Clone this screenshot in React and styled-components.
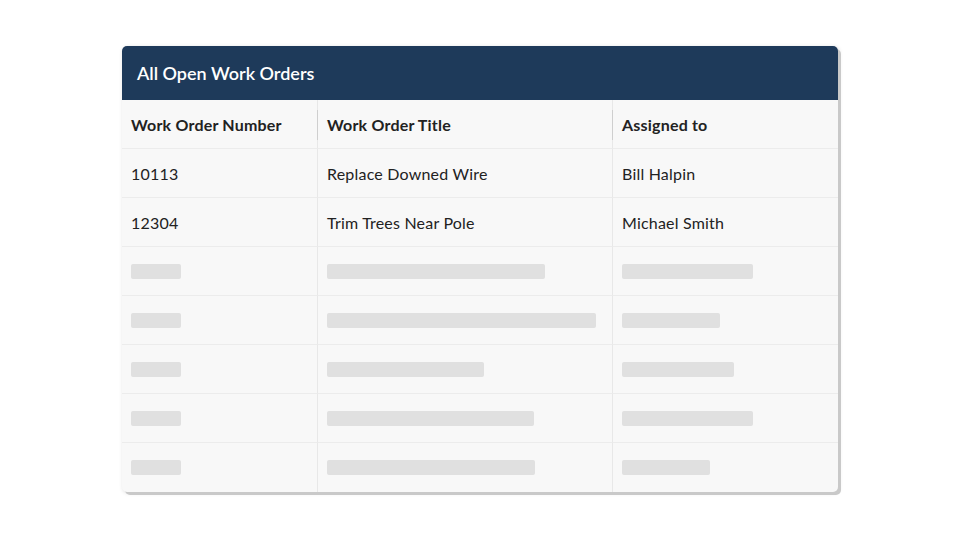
import React from "react";
import styled, { createGlobalStyle } from "styled-components";

const G = createGlobalStyle`
  body { margin:0; background:#fff; font-family: Lato, "Open Sans", sans-serif; }
`;
const Page = styled.div`
  width:960px; height:540px; padding:46px 0 0 122px; box-sizing:border-box;
`;
const Card = styled.div`
  width:716px; border-radius:5px; overflow:hidden; background:#f8f8f8;
  box-shadow: 3px 3px 0 #c9c9c9, 1px 1px 4px rgba(0,0,0,0.15);
`;
const Title = styled.div`
  height:54px; background:#1e3a5a; color:#fff; font-size:18px; font-weight:600;
  display:flex; align-items:center; padding-left:15px;
`;
const Grid = styled.div`
  display:grid; grid-template-columns:195px 295px 226px;
`;
const Cell = styled.div`
  height:49px; box-sizing:border-box; display:flex; align-items:center; padding-left:9px;
  border-bottom:1px solid #ececec; border-left:${p => p.$first ? "none" : "1px solid #e8e8e8"};
  font-size:16px; color:#222; font-weight:${p => p.$head ? 700 : 400}; letter-spacing:0.2px;
  position:relative;
  ${p => p.$last && "border-bottom:none;"}
`;
const HeadDivider = styled.span`
  position:absolute; left:-1px; top:10px; width:1px; height:30px; background:#cfcfcf;
`;
const Bar = styled.div`
  height:15px; background:#e0e0e0; border-radius:2px;
`;

const heads = ["Work Order Number", "Work Order Title", "Assigned to"];
const data = [["10113","Replace Downed Wire","Bill Halpin"],["12304","Trim Trees Near Pole","Michael Smith"]];
const bars = [[50,218,131],[50,269,98],[50,157,112],[50,207,131],[50,208,88]];

export default function App(){
  return <><G/><Page><Card>
    <Title>All Open Work Orders</Title>
    <Grid>
      {heads.map((h,i)=><Cell key={h} $head $first={i===0}>{i>0&&<HeadDivider/>}{h}</Cell>)}
      {data.map((r,ri)=>r.map((c,i)=><Cell key={ri+"-"+i} $first={i===0}>{c}</Cell>))}
      {bars.map((r,ri)=>r.map((w,i)=><Cell key={"b"+ri+i} $first={i===0} $last={ri===bars.length-1}><Bar style={{width:w}}/></Cell>))}
    </Grid>
  </Card></Page></>;
}
